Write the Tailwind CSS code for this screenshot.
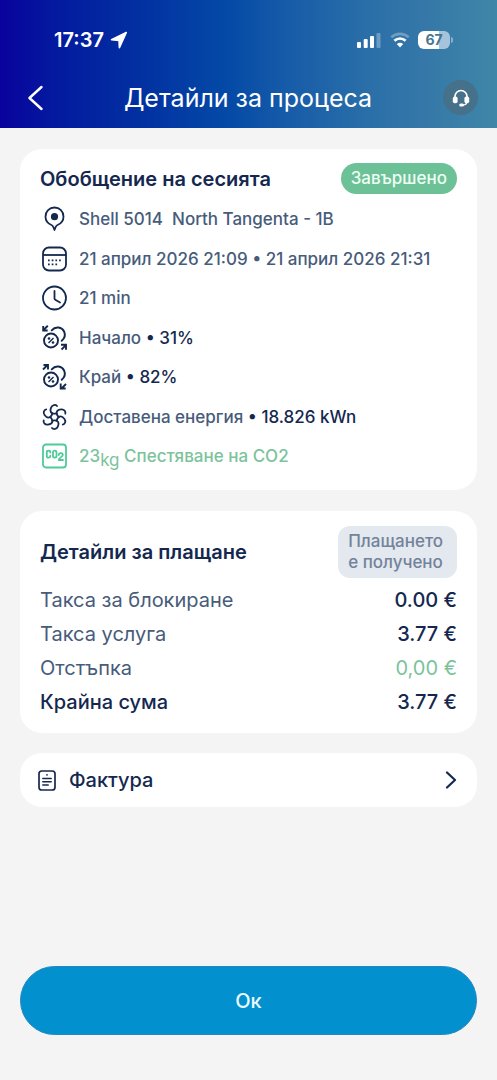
<!DOCTYPE html>
<html lang="bg">
<head>
<meta charset="utf-8">
<meta name="viewport" content="width=device-width, initial-scale=1">
<title>Детайли за процеса</title>
<script src="https://cdn.jsdelivr.net/npm/@tailwindcss/browser@4"></script>
</head>
<body class="flex min-h-screen flex-col bg-[#f4f4f4] font-['Inter','Liberation_Sans',sans-serif] text-[#14284f]">
<header class="flex flex-col bg-[linear-gradient(90deg,#0a029c_0%,#03189f_10%,#0230a1_28%,#044aa6_46%,#1459a8_56%,#2a6fa8_74%,#3578a8_86%,#3f87a8_100%)] pb-3 pt-7 text-white">
  <div class="flex h-6 items-center justify-between pl-[54px] pr-[44px]">
    <div class="flex items-center gap-1.5">
      <span class="text-[20px] leading-6 font-semibold">17:37</span>
      <svg class="size-[18px]" viewBox="0 0 18 18" fill="currentColor" stroke="currentColor" stroke-linejoin="round" aria-hidden="true"><path d="M16.300 1.500 1.500 8.700l7.500.8.400 7.200Z" stroke-width="1.600"/></svg>
    </div>
    <div class="flex items-center gap-2">
      <svg class="h-4 w-[26px]" viewBox="0 0 26 16" fill="currentColor" aria-hidden="true"><rect x="1" y="10" width="4" height="6" rx="1"/><rect x="7.700" y="7" width="4" height="9" rx="1"/><rect x="14" y="4" width="4" height="12" rx="1"/><rect x="20.500" y="1" width="4" height="15" rx="1" opacity=".3"/></svg>
      <svg class="h-4 w-[20px]" viewBox="0 0 20 16" fill="none" stroke="currentColor" stroke-width="2.600" aria-hidden="true"><path d="M1.300 5.300C6.200.7 13.800.7 18.700 5.300" opacity=".3"/><path d="M4.400 8.700c3.200-3 8-3 11.200 0"/><path d="M6.800 11.900 10 15.600l3.200-3.700c-1.900-1.500-4.500-1.500-6.400 0Z" fill="currentColor" stroke="none"/></svg>
      <div class="flex items-center gap-px">
        <span class="flex h-[18px] w-8 items-center justify-center rounded-md bg-linear-to-r from-white from-67% to-[#a5c4dc] to-67% text-[14px] leading-none font-bold text-[#47778f]">67</span>
        <span class="h-1.5 w-0.5 rounded-r-full bg-white/40"></span>
      </div>
    </div>
  </div>
  <div class="mt-[27px] flex h-[37px] items-center justify-between pl-[18px] pr-[19px]">
    <button type="button" aria-label="Назад" class="flex h-9 w-[35px] items-center justify-center"><svg class="h-[26px] w-4" viewBox="0 0 16 26" fill="none" stroke="currentColor" stroke-width="2.400" stroke-linecap="round" stroke-linejoin="round"><path d="M13.500 2 1.500 13l12 11"/></svg></button>
    <h1 class="text-[25px] leading-9">Детайли за процеса</h1>
    <button type="button" aria-label="Поддръжка" class="flex size-[35px] items-center justify-center rounded-full bg-[#45718a]"><svg class="size-[18px]" viewBox="0 0 18 18" fill="none" stroke="currentColor" stroke-linecap="round" aria-hidden="true"><path d="M3 9V7.500a6 6 0 0 1 12 0V9" stroke-width="1.700"/><path d="M15 12c0 2.700-1.400 3.900-4 4.100" stroke-width="1.300"/><rect x=".8" y="7.500" width="4.800" height="6.800" rx="2" fill="currentColor" stroke="none"/><rect x="12.400" y="7.500" width="4.800" height="6.800" rx="2" fill="currentColor" stroke="none"/><rect x="7.200" y="14.500" width="4.800" height="3" rx="1.500" fill="currentColor" stroke="none"/></svg></button>
  </div>
</header>

<main class="flex flex-1 flex-col px-5 pt-[21px]">
  <section class="rounded-[22px] bg-white px-5 pb-[21px] pt-3.5">
    <div class="flex items-center justify-between">
      <h2 class="text-[20px] leading-6 font-semibold">Обобщение на сесията</h2>
      <span class="rounded-full bg-[#6cc196] px-2.5 text-[17px] leading-[31px] font-medium text-[#eefff5]">Завършено</span>
    </div>
    <ul class="mt-3 flex min-h-[263px] flex-col justify-between text-[17px] leading-[26px] font-medium text-[#475c7a]">
      <li class="flex items-center gap-[11px]">
        <svg class="ml-0.5 size-[26px]" viewBox="0 0 26 26" fill="none" stroke="#14284f" stroke-width="1.800" stroke-linejoin="round" aria-hidden="true"><path d="M12.500 1.500a9 9 0 0 0-9 9.200c0 4 2.500 6.800 6 8.300 1 .4 1.400 1 1.800 2l1.200 3 1.200-3c.4-1 .8-1.600 1.800-2 3.500-1.500 6-4.300 6-8.300a9 9 0 0 0-9-9.200Z"/><circle cx="12.500" cy="10.700" r="3.600" fill="#14284f" stroke="none"/></svg>
        <span class="whitespace-pre">Shell 5014  North Tangenta - 1B</span>
      </li>
      <li class="flex items-center gap-[11px]">
        <svg class="ml-0.5 size-[26px]" viewBox="0 0 26 26" fill="none" stroke="#14284f" stroke-width="1.800" aria-hidden="true"><rect x="1" y="1.500" width="23" height="23" rx="6"/><path d="M1 9h23"/><path d="M6 14.300h14M6 18.300h11" stroke-width="1.700" stroke-dasharray="1.700 2"/></svg>
        <span>21 април 2026 21:09 • 21 април 2026 21:31</span>
      </li>
      <li class="flex items-center gap-[11px]">
        <svg class="ml-0.5 size-[26px]" viewBox="0 0 26 26" fill="none" stroke="#14284f" stroke-width="1.800" stroke-linecap="round" stroke-linejoin="round" aria-hidden="true"><circle cx="12.500" cy="13" r="11.500"/><path d="M12.500 6v7.500c0 .7.300 1 .8 1.300l4.700 2.700"/></svg>
        <span>21 min</span>
      </li>
      <li class="flex items-center gap-[11px]">
        <svg class="ml-0.5 size-[26px]" viewBox="0 0 26 26" fill="none" stroke="#14284f" stroke-width="1.900" aria-hidden="true"><circle cx="9" cy="15.500" r="7"/><path d="M9.700 5.300C13.500.8 20 2 22.100 6.500c1.500 3.400.4 7-2.400 9.300" stroke-linecap="round"/><path d="m6.500 18 5-5" stroke-width="1.500"/><circle cx="7" cy="13.500" r="1.300" fill="#14284f" stroke="none"/><circle cx="11" cy="17.500" r="1.300" fill="#14284f" stroke="none"/><path d="M5.800.8 1.500 5M1.200 1v4.500h4.500M19.500 24.500l4.200-4.200M19 19.800h5v5"/></svg>
        <span>Начало <span class="text-[#14284f]">• 31%</span></span>
      </li>
      <li class="flex items-center gap-[11px]">
        <svg class="ml-0.5 size-[26px]" viewBox="0 0 26 26" fill="none" stroke="#14284f" stroke-width="1.900" aria-hidden="true"><circle cx="9" cy="15.500" r="7"/><path d="M9.700 5.300C13.500.8 20 2 22.100 6.500c1.500 3.400.4 7-2.400 9.300" stroke-linecap="round"/><path d="m6.500 18 5-5" stroke-width="1.500"/><circle cx="7" cy="13.500" r="1.300" fill="#14284f" stroke="none"/><circle cx="11" cy="17.500" r="1.300" fill="#14284f" stroke="none"/><path d="M1 5.500 5.500 1M1.500 1H6v4.500M24 20l-4.500 4.500M18.700 19.500v5h5"/></svg>
        <span>Край <span class="text-[#14284f]">• 82%</span></span>
      </li>
      <li class="flex items-center gap-[11px]">
        <svg class="ml-0.5 size-[26px]" viewBox="0 0 26 26" fill="none" stroke="#14284f" stroke-width="1.800" stroke-linecap="round" stroke-linejoin="round" aria-hidden="true"><path id="blade" d="M15 2C13.500.2 10.400.7 9.200 3.400 8.100 6 8.600 8.500 10.300 9.300c1.300.5 3 .4 4.400 0"/><use href="#blade" transform="rotate(60 12.500 13)"/><use href="#blade" transform="rotate(120 12.500 13)"/><use href="#blade" transform="rotate(180 12.500 13)"/><use href="#blade" transform="rotate(240 12.500 13)"/><use href="#blade" transform="rotate(300 12.500 13)"/></svg>
        <span>Доставена енергия <span class="text-[#14284f]">• 18.826 kWn</span></span>
      </li>
      <li class="flex items-center gap-[11px] text-[#7cc39b]">
        <svg class="ml-0.5 size-[26px]" viewBox="0 0 26 26" fill="none" stroke="#4fcb98" stroke-width="1.800" stroke-linecap="round" stroke-linejoin="round" aria-hidden="true"><rect x="1" y="1.500" width="23" height="23" rx="3"/><path d="M8.300 9.500V9c0-.8-.6-1.300-1.700-1.300S4.800 8.300 4.800 9v4.200c0 .9.600 1.400 1.800 1.400s1.700-.6 1.700-1.300v-.6"/><rect x="11" y="7.700" width="3.500" height="6.900" rx="1.600"/><path d="M16.800 12c0-2.400 4-2.400 4 0 0 1.800-4 2.600-4 5h4.200"/></svg>
        <span>23<sub class="text-[17px] leading-none font-normal">kg</sub> Спестяване на CO2</span>
      </li>
    </ul>
  </section>

  <section class="mt-[21px] rounded-[22px] bg-white px-5 pb-3.5 pt-[15px]">
    <div class="flex items-center justify-between">
      <h2 class="text-[20px] leading-6 font-semibold">Детайли за плащане</h2>
      <span class="rounded-xl bg-[#e4e8ef] py-[5px] pl-2.5 pr-3.5 text-[17px] leading-[21px] font-medium text-[#72839a]">Плащането<br>е получено</span>
    </div>
    <table class="mt-[5px] w-full text-[20px] leading-[34px]">
      <tbody>
        <tr><th scope="row" class="p-0 text-left font-normal text-[#475c7a]">Такса за блокиране</th><td class="p-0 text-right font-medium">0.00 €</td></tr>
        <tr><th scope="row" class="p-0 text-left font-normal text-[#475c7a]">Такса услуга</th><td class="p-0 text-right font-medium">3.77 €</td></tr>
        <tr><th scope="row" class="p-0 text-left font-normal text-[#475c7a]">Отстъпка</th><td class="p-0 text-right text-[#7cc39b]">0,00 €</td></tr>
        <tr><th scope="row" class="p-0 text-left font-medium">Крайна сума</th><td class="p-0 text-right font-medium">3.77 €</td></tr>
      </tbody>
    </table>
  </section>

  <button type="button" class="mt-5 flex h-[54px] w-full items-center rounded-[22px] bg-white pl-[18px] pr-5 text-left">
    <svg class="h-[21px] w-[18px]" viewBox="0 0 18 21" fill="none" stroke="#14284f" stroke-width="1.700" stroke-linecap="round" aria-hidden="true"><rect x="1" y="1" width="16" height="19" rx="2.800"/><path d="M4.800 8.500h8.400M4.800 11.700h8.400M4.800 14.900h5.400" stroke-width="1.500"/><circle cx="9" cy="4.800" r=".9" fill="#14284f" stroke="none"/></svg>
    <span class="ml-[13px] flex-1 text-[20px] leading-6 font-medium">Фактура</span>
    <svg class="h-[18px] w-3" viewBox="0 0 12 18" fill="none" stroke="#14284f" stroke-width="2.200" stroke-linecap="round" stroke-linejoin="round" aria-hidden="true"><path d="m2 1.500 8 7.500-8 7.500"/></svg>
  </button>
</main>

<footer class="px-5 pb-[45px]">
  <button type="button" class="h-[69px] w-full rounded-full border border-[#2488c0] bg-[#0390ce] text-[20px] leading-6 font-medium text-[#ecfbff]">Ок</button>
</footer>
</body>
</html>
